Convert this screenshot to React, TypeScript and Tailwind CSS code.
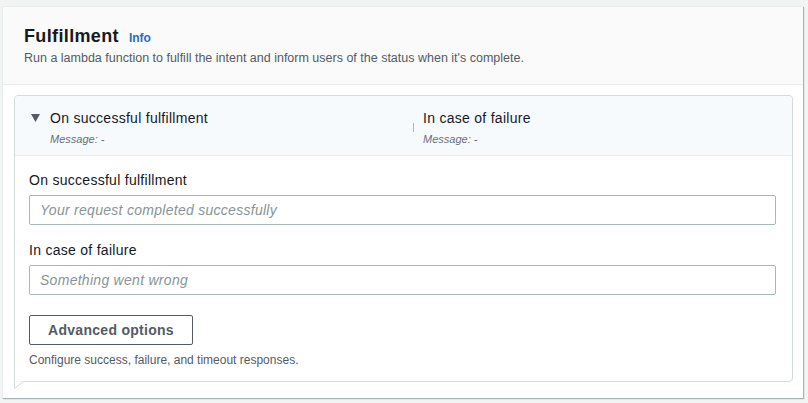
import React from 'react';

function Caret() {
  return (
    <svg width="9" height="8" viewBox="0 0 9 8" className="mt-[5px] shrink-0">
      <path d="M0 0 H9 L4.5 8 Z" fill="#545b64" />
    </svg>
  );
}

function Summary({ title, caret }: { title: string; caret?: boolean }) {
  return (
    <div className="flex gap-[10px]">
      {caret && <Caret />}
      <div>
        <div className="text-[14px] leading-[18px] tracking-[0.02em] text-[#16191f]">{title}</div>
        <div className="mt-[5px] text-[11px] leading-[14px] italic text-[#687078]">Message: -</div>
      </div>
    </div>
  );
}

function Field({ label, placeholder }: { label: string; placeholder: string }) {
  return (
    <div>
      <div className="text-[14px] leading-[18px] tracking-[0.02em] text-[#16191f] mb-[6px]">{label}</div>
      <input
        className="block w-full h-[30px] px-[10px] border border-[#aab7b8] rounded-[2px] text-[14px] italic tracking-[0.02em] placeholder:text-[#879596] outline-none"
        placeholder={placeholder}
      />
    </div>
  );
}

export default function App() {
  return (
    <div
      className="min-h-[403px] bg-[#f2f3f3] pt-[6px] pl-[2px] pr-[5px] pb-[6px]"
      style={{ fontFamily: '"Liberation Sans", Arial, sans-serif' }}
    >
      <div className="bg-white shadow-[1px_1px_1px_0_rgba(0,28,36,0.3)] border-l border-t border-[#eaeded]">
        <div className="bg-[#fafafa] border-b border-[#eaeded] px-[21px] pt-[18px] pb-[18px]">
          <div className="flex items-baseline gap-[10px]">
            <h2 className="text-[18px] leading-[22px] font-bold tracking-[0.02em] text-[#16191f]">Fulfillment</h2>
            <span className="text-[12px] font-bold text-[#1f6fc0]">Info</span>
          </div>
          <p className="mt-[3px] text-[12.5px] leading-[16px] text-[#545b64]">
            Run a lambda function to fulfill the intent and inform users of the status when it's complete.
          </p>
        </div>
        <div className="pt-[10px] pl-[11px] pr-[10px] pb-[16px]">
          <div className="relative border border-[#d5dbdb] rounded-[4px] rounded-bl-none">
            <div className="bg-[#f7fafd] border-b border-[#eaeded] rounded-t-[4px] flex pt-[13px] pb-[9px]">
              <div className="w-[398px] pl-[16px]">
                <Summary title="On successful fulfillment" caret />
              </div>
              <div className="flex items-start">
                <div className="w-px h-[9px] bg-[#aab7b8] mt-[14px] mr-[9px]" />
                <Summary title="In case of failure" />
              </div>
            </div>
            <div className="pl-[14px] pr-[16px] pt-[15px] pb-[13px]">
              <div className="flex flex-col gap-[16px]">
                <Field label="On successful fulfillment" placeholder="Your request completed successfully" />
                <Field label="In case of failure" placeholder="Something went wrong" />
              </div>
              <button className="mt-[20px] h-[30px] w-[164px] border border-[#545b64] rounded-[2px] text-[14px] font-bold tracking-[0.02em] text-[#545b64] bg-white">
                Advanced options
              </button>
              <p className="mt-[7px] text-[12px] leading-[16px] text-[#545b64]">
                Configure success, failure, and timeout responses.
              </p>
            </div>
            <svg className="absolute left-[-1px] top-full" width="12" height="8" viewBox="0 0 12 8">
              <path d="M0.5 0 V7.5 L9.5 0.5" fill="white" stroke="#d5dbdb" strokeWidth="1" />
            </svg>
          </div>
        </div>
      </div>
    </div>
  );
}
